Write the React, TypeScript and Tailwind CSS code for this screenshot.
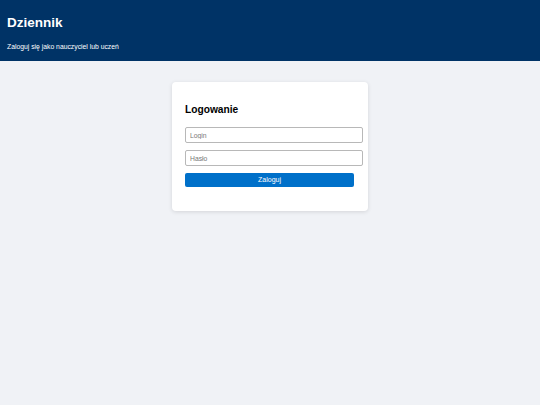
export default function App() {
  return (
    <div className="min-h-[405px] bg-[#f0f2f6] font-['Liberation_Sans',Arial,sans-serif]">
      <header className="h-[61px] bg-[#003366] px-[7px] pt-[14px] text-white">
        <h1 className="text-[13.5px] leading-[18px] font-bold">Dziennik</h1>
        <p className="mt-[11px] text-[6.8px] leading-[8px]">Zaloguj się jako nauczyciel lub uczeń</p>
      </header>

      <main className="flex justify-center pt-[21px]">
        <div className="h-[129px] w-[196px] rounded-[4px] bg-white px-[13px] pt-[21px] shadow-[0_1px_4px_rgba(0,0,0,0.12)]">
          <h2 className="text-[10.2px] leading-[14px] font-bold text-black">Logowanie</h2>
          <form className="mt-[10px] flex flex-col" onSubmit={(e) => e.preventDefault()}>
            <input
              placeholder="Login"
              className="h-[16px] w-[178px] rounded-[2px] border border-[#b8b8b8] bg-white px-[4px] text-[6.8px] text-black placeholder:text-[#777] outline-none"
            />
            <input
              type="password"
              placeholder="Hasło"
              className="mt-[7px] h-[16px] w-[178px] rounded-[2px] border border-[#b8b8b8] bg-white px-[4px] text-[6.8px] text-black placeholder:text-[#777] outline-none"
            />
            <button
              type="submit"
              className="mt-[7px] h-[14px] w-[169px] rounded-[2px] bg-[#0070c9] text-[7px] leading-[14px] text-white"
            >
              Zaloguj
            </button>
          </form>
        </div>
      </main>
    </div>
  );
}
